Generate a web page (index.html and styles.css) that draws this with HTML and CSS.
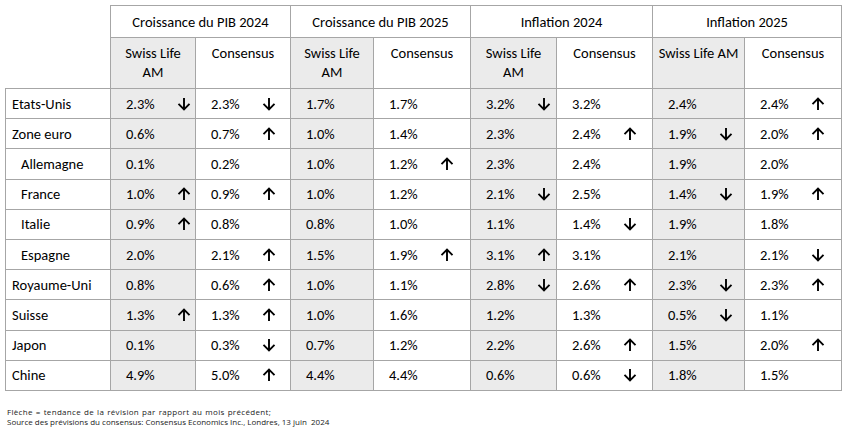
FILE: index.html
```html
<!DOCTYPE html>
<html lang="fr">
<head>
<meta charset="utf-8">
<title>Prévisions</title>
<link rel="stylesheet" href="styles.css">
</head>
<body>
<svg class="defs" width="0" height="0" aria-hidden="true">
  <defs>
    <symbol id="up" viewBox="0 0 14 14"><path d="M7 13V1.6M1.5 7.1L7 1.6l5.5 5.5" fill="none" stroke="#000" stroke-width="1.9"/></symbol>
    <symbol id="dn" viewBox="0 0 14 14"><path d="M7 1v11.4M1.5 6.9L7 12.4l5.5-5.5" fill="none" stroke="#000" stroke-width="1.9"/></symbol>
  </defs>
</svg>
<main class="page">
<table class="fc">
  <colgroup>
    <col class="c-label"><col class="c1"><col class="c2"><col class="c3"><col class="c4"><col class="c5"><col class="c6"><col class="c7"><col class="c8">
  </colgroup>
  <thead>
    <tr class="h1">
      <th class="corner"></th>
      <th colspan="2">Croissance du PIB 2024</th>
      <th colspan="2">Croissance du PIB 2025</th>
      <th colspan="2">Inflation 2024</th>
      <th colspan="2">Inflation 2025</th>
    </tr>
    <tr class="h2">
      <th class="corner"></th>
      <th class="sl">Swiss Life<br>AM</th><th>Consensus</th>
      <th class="sl">Swiss Life<br>AM</th><th>Consensus</th>
      <th class="sl">Swiss Life<br>AM</th><th>Consensus</th>
      <th class="sl">Swiss Life AM</th><th>Consensus</th>
    </tr>
  </thead>
  <tbody>
    <tr><th>Etats-Unis</th>
      <td class="sl"><div class="v"><span>2.3%</span><svg class="ar"><use href="#dn"/></svg></div></td>
      <td><div class="v"><span>2.3%</span><svg class="ar"><use href="#dn"/></svg></div></td>
      <td class="sl"><div class="v"><span>1.7%</span></div></td>
      <td><div class="v"><span>1.7%</span></div></td>
      <td class="sl"><div class="v"><span>3.2%</span><svg class="ar"><use href="#dn"/></svg></div></td>
      <td><div class="v"><span>3.2%</span></div></td>
      <td class="sl"><div class="v"><span>2.4%</span></div></td>
      <td><div class="v"><span>2.4%</span><svg class="ar"><use href="#up"/></svg></div></td>
    </tr>
    <tr><th>Zone euro</th>
      <td class="sl"><div class="v"><span>0.6%</span></div></td>
      <td><div class="v"><span>0.7%</span><svg class="ar"><use href="#up"/></svg></div></td>
      <td class="sl"><div class="v"><span>1.0%</span></div></td>
      <td><div class="v"><span>1.4%</span></div></td>
      <td class="sl"><div class="v"><span>2.3%</span></div></td>
      <td><div class="v"><span>2.4%</span><svg class="ar"><use href="#up"/></svg></div></td>
      <td class="sl"><div class="v"><span>1.9%</span><svg class="ar"><use href="#dn"/></svg></div></td>
      <td><div class="v"><span>2.0%</span><svg class="ar"><use href="#up"/></svg></div></td>
    </tr>
    <tr><th class="sub">Allemagne</th>
      <td class="sl"><div class="v"><span>0.1%</span></div></td>
      <td><div class="v"><span>0.2%</span></div></td>
      <td class="sl"><div class="v"><span>1.0%</span></div></td>
      <td><div class="v"><span>1.2%</span><svg class="ar"><use href="#up"/></svg></div></td>
      <td class="sl"><div class="v"><span>2.3%</span></div></td>
      <td><div class="v"><span>2.4%</span></div></td>
      <td class="sl"><div class="v"><span>1.9%</span></div></td>
      <td><div class="v"><span>2.0%</span></div></td>
    </tr>
    <tr><th class="sub">France</th>
      <td class="sl"><div class="v"><span>1.0%</span><svg class="ar"><use href="#up"/></svg></div></td>
      <td><div class="v"><span>0.9%</span><svg class="ar"><use href="#up"/></svg></div></td>
      <td class="sl"><div class="v"><span>1.0%</span></div></td>
      <td><div class="v"><span>1.2%</span></div></td>
      <td class="sl"><div class="v"><span>2.1%</span><svg class="ar"><use href="#dn"/></svg></div></td>
      <td><div class="v"><span>2.5%</span></div></td>
      <td class="sl"><div class="v"><span>1.4%</span><svg class="ar"><use href="#dn"/></svg></div></td>
      <td><div class="v"><span>1.9%</span><svg class="ar"><use href="#up"/></svg></div></td>
    </tr>
    <tr><th class="sub">Italie</th>
      <td class="sl"><div class="v"><span>0.9%</span><svg class="ar"><use href="#up"/></svg></div></td>
      <td><div class="v"><span>0.8%</span></div></td>
      <td class="sl"><div class="v"><span>0.8%</span></div></td>
      <td><div class="v"><span>1.0%</span></div></td>
      <td class="sl"><div class="v"><span>1.1%</span></div></td>
      <td><div class="v"><span>1.4%</span><svg class="ar"><use href="#dn"/></svg></div></td>
      <td class="sl"><div class="v"><span>1.9%</span></div></td>
      <td><div class="v"><span>1.8%</span></div></td>
    </tr>
    <tr><th class="sub">Espagne</th>
      <td class="sl"><div class="v"><span>2.0%</span></div></td>
      <td><div class="v"><span>2.1%</span><svg class="ar"><use href="#up"/></svg></div></td>
      <td class="sl"><div class="v"><span>1.5%</span></div></td>
      <td><div class="v"><span>1.9%</span><svg class="ar"><use href="#up"/></svg></div></td>
      <td class="sl"><div class="v"><span>3.1%</span><svg class="ar"><use href="#up"/></svg></div></td>
      <td><div class="v"><span>3.1%</span></div></td>
      <td class="sl"><div class="v"><span>2.1%</span></div></td>
      <td><div class="v"><span>2.1%</span><svg class="ar"><use href="#dn"/></svg></div></td>
    </tr>
    <tr><th>Royaume-Uni</th>
      <td class="sl"><div class="v"><span>0.8%</span></div></td>
      <td><div class="v"><span>0.6%</span><svg class="ar"><use href="#up"/></svg></div></td>
      <td class="sl"><div class="v"><span>1.0%</span></div></td>
      <td><div class="v"><span>1.1%</span></div></td>
      <td class="sl"><div class="v"><span>2.8%</span><svg class="ar"><use href="#dn"/></svg></div></td>
      <td><div class="v"><span>2.6%</span><svg class="ar"><use href="#up"/></svg></div></td>
      <td class="sl"><div class="v"><span>2.3%</span><svg class="ar"><use href="#dn"/></svg></div></td>
      <td><div class="v"><span>2.3%</span><svg class="ar"><use href="#up"/></svg></div></td>
    </tr>
    <tr><th>Suisse</th>
      <td class="sl"><div class="v"><span>1.3%</span><svg class="ar"><use href="#up"/></svg></div></td>
      <td><div class="v"><span>1.3%</span><svg class="ar"><use href="#up"/></svg></div></td>
      <td class="sl"><div class="v"><span>1.0%</span></div></td>
      <td><div class="v"><span>1.6%</span></div></td>
      <td class="sl"><div class="v"><span>1.2%</span></div></td>
      <td><div class="v"><span>1.3%</span></div></td>
      <td class="sl"><div class="v"><span>0.5%</span><svg class="ar"><use href="#dn"/></svg></div></td>
      <td><div class="v"><span>1.1%</span></div></td>
    </tr>
    <tr><th>Japon</th>
      <td class="sl"><div class="v"><span>0.1%</span></div></td>
      <td><div class="v"><span>0.3%</span><svg class="ar"><use href="#dn"/></svg></div></td>
      <td class="sl"><div class="v"><span>0.7%</span></div></td>
      <td><div class="v"><span>1.2%</span></div></td>
      <td class="sl"><div class="v"><span>2.2%</span></div></td>
      <td><div class="v"><span>2.6%</span><svg class="ar"><use href="#up"/></svg></div></td>
      <td class="sl"><div class="v"><span>1.5%</span></div></td>
      <td><div class="v"><span>2.0%</span><svg class="ar"><use href="#up"/></svg></div></td>
    </tr>
    <tr><th>Chine</th>
      <td class="sl"><div class="v"><span>4.9%</span></div></td>
      <td><div class="v"><span>5.0%</span><svg class="ar"><use href="#up"/></svg></div></td>
      <td class="sl"><div class="v"><span>4.4%</span></div></td>
      <td><div class="v"><span>4.4%</span></div></td>
      <td class="sl"><div class="v"><span>0.6%</span></div></td>
      <td><div class="v"><span>0.6%</span><svg class="ar"><use href="#dn"/></svg></div></td>
      <td class="sl"><div class="v"><span>1.8%</span></div></td>
      <td><div class="v"><span>1.5%</span></div></td>
    </tr>
  </tbody>
</table>
<footer class="notes">
  <p class="n1">Flèche = tendance de la révision par rapport au mois précédent;</p>
  <p>Source des prévisions du consensus: Consensus Economics Inc., Londres, 13 juin&nbsp; 2024</p>
</footer>
</main>
</body>
</html>
```
FILE: styles.css
```css
* { box-sizing: border-box; }
html, body { margin: 0; padding: 0; background: #fff; }
body {
  font-family: "Carlito", "Calibri", "Lato", "Liberation Sans", sans-serif;
  color: #000;
  width: 849px;
  height: 431px;
  overflow: hidden;
}
.defs { position: absolute; width: 0; height: 0; }
.page { padding: 5px 0 0 5px; }

.fc {
  border-collapse: collapse;
  table-layout: fixed;
  width: 837px;
  font-size: 14.5px;
}
.c-label { width: 105px; }
.c1 { width: 85px; }
.c2 { width: 95px; }
.c3 { width: 83px; }
.c4 { width: 97px; }
.c5 { width: 86px; }
.c6 { width: 96px; }
.c7 { width: 92px; }
.c8 { width: 97px; }

.fc th, .fc td {
  border: 1px solid #a6a6a6;
  padding: 0;
  font-weight: normal;
}
.fc th.corner { border: none; border-right: 1px solid #a6a6a6; }
.fc thead .h2 th.corner { border-bottom: 1px solid #a6a6a6; }

.h1 th { height: 32px; text-align: center; vertical-align: middle; }
.h2 th {
  height: 51px;
  text-align: center;
  vertical-align: top;
  padding-top: 6px;
  line-height: 19px;
}
.fc .sl { background: #ebebeb; }

.fc tbody tr { height: 30.2px; }
.fc tbody th {
  text-align: left;
  padding-left: 6px;
  white-space: nowrap;
}
.fc tbody th.sub { padding-left: 15px; }

.v {
  display: flex;
  align-items: center;
  padding-left: 15px;
}
.v span { width: 51px; flex: none; }
.ar { width: 14px; height: 14px; flex: none; }

.notes {
  padding: 16px 0 0 2px;
  font-family: "Open Sans", "Liberation Sans", sans-serif;
  font-size: 8px;
  color: #222;
}
.notes p { margin: 0; line-height: 10px; }
.notes .n1 { letter-spacing: 0.32px; word-spacing: 0.6px; }
```
